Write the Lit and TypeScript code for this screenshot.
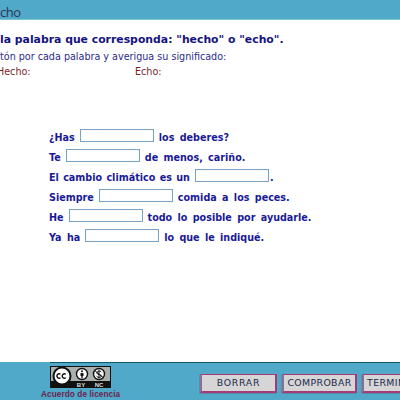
import { LitElement, html, css } from "lit";
import { customElement } from "lit/decorators.js";

const rows: [string, string, boolean][] = [
  ["¿Has", "los deberes?", false],
  ["Te", "de menos, cariño.", false],
  ["El cambio climático es un", ".", true],
  ["Siempre", "comida a los peces.", false],
  ["He", "todo lo posible por ayudarle.", false],
  ["Ya ha", "lo que le indiqué.", false],
];

@customElement("app-root")
export class AppRoot extends LitElement {
  static styles = css`
    :host { display: block; width: 400px; height: 400px; overflow: hidden; background: #fff; font-family: "DejaVu Sans", Verdana, sans-serif; }
    .page { display: flex; flex-direction: column; height: 400px; }
    .header { height: 20px; box-sizing: border-box; background: #50a9c8; border-bottom: 1px solid #7cc6d6; display: flex; align-items: flex-end; flex: none; }
    .logo { font: 400 13px/14px "Open Sans", sans-serif; color: #2b3558; letter-spacing: -0.5px; height: 14px; }
    .main { flex: 1; min-height: 0; display: flex; flex-direction: column; overflow: hidden; }
    .title { margin: 13px 0 0 0; font-size: 10.85px; line-height: 14px; font-weight: 700; color: #14147e; white-space: nowrap; }
    .sub { margin: 3px 0 0 0; font-size: 9.6px; line-height: 14px; color: #2b2b8c; white-space: nowrap; }
    .defs { margin: 1px 0 0 -3px; display: flex; font-size: 9.6px; line-height: 14px; color: #7a1f1f; }
    .defs span:first-child { width: 138px; }
    .rows { margin: 51px 0 0 49px; display: flex; flex-direction: column; gap: 6.1px; }
    .row { display: flex; align-items: center; height: 14px; font-size: 9.6px; font-weight: 700; color: #1a1a96; word-spacing: 2px; white-space: nowrap; gap: 5px; }
    .row .input { width: 72px; height: 11px; margin-top: -4px; border: 1px solid #7ba3c6; background: #fff; flex: none; box-shadow: inset 0 0 1px #c5d7e8; }
    .row .tight { margin-left: -4px; }
    .row .narrow { word-spacing: 1px; }
    .footer { height: 38px; flex: none; box-sizing: border-box; background: #50a9c8; position: relative; display: flex; }
    .rule { position: absolute; left: 50px; right: 0; top: 0; height: 1px; background: #0e5a62; }
    .lic { width: 200px; flex: none; display: flex; flex-direction: column; align-items: flex-start; padding: 4px 0 0 41px; box-sizing: border-box; }
    .lic svg { display: block; margin-left: 9px; margin-bottom: 1px; }
    .lic span { font: 700 8.2px/11px "Liberation Sans", Arial, sans-serif; letter-spacing: 0.1px; color: #6b1f4e; white-space: nowrap; }
    .buttons { display: flex; gap: 5px; padding-top: 12px; align-items: flex-start; }
    .btn { box-sizing: border-box; height: 19px; background: #d6d6d6; border-style: solid; border-width: 1px 2px 2px 2px; border-color: #a53a78 #a53a78 #a53a78 #8a6f98; font: 9.4px/16px "DejaVu Sans", sans-serif; color: #23294c; text-align: center; white-space: nowrap; overflow: hidden; flex: none; box-shadow: -1px 1px 0 #5b8aa5; }
    .b1 { width: 77px; letter-spacing: .7px; }
    .b2 { width: 75px; letter-spacing: .35px; }
    .b3 { width: 60px; text-align: left; padding-left: 3px; letter-spacing: .4px; }
  `;

  render() {
    return html`<div class="page">
      <div class="header"><div class="logo">cho</div></div>
      <div class="main">
        <div class="title">la palabra que corresponda: "hecho" o "echo".</div>
        <div class="sub">tón por cada palabra y averigua su significado:</div>
        <div class="defs"><span>Hecho:</span><span>Echo:</span></div>
        <div class="rows">
          ${rows.map(([a, b, tight]) => html`<div class="row">
            <span class=${tight ? "narrow" : ""}>${a}</span><span class="input"></span><span class=${tight ? "tight" : ""}>${b}</span>
          </div>`)}
        </div>
      </div>
      <div class="footer">
        <div class="rule"></div>
        <div class="lic">
          <svg width="61" height="22" viewBox="0 0 61 22">
            <rect width="61" height="22" fill="#111"/>
            <rect x="1" y="1" width="59" height="14" fill="#aab0ab"/>
            <circle cx="12" cy="10" r="8.5" fill="#fff" stroke="#111" stroke-width="2"/>
            <path d="M10.5 8.3a2.2 2.2 0 1 0 0 3.4M15.8 8.3a2.2 2.2 0 1 0 0 3.4" fill="none" stroke="#111" stroke-width="1.4"/>
            <circle cx="32" cy="8" r="5.5" fill="#fff" stroke="#111" stroke-width="1.4"/>
            <circle cx="32" cy="5.2" r="1" fill="#111"/>
            <path d="M30.5 7h3v3h-.8v2.2h-1.4V10h-.8z" fill="#111"/>
            <circle cx="49" cy="8" r="5.5" fill="#fff" stroke="#111" stroke-width="1.4"/>
            <path d="M51.5 6.2C50.5 4.6 47 4.6 46.8 7c0 2 4.6 1 4.6 3 0 1.8-3.4 2-4.8.3M49 3.6v8.8M44.6 4.4l8.8 7.4" fill="none" stroke="#111" stroke-width="1"/>
            <text x="31" y="20.5" font-family="Liberation Sans" font-size="6" font-weight="700" fill="#ddd" text-anchor="middle">BY</text>
            <text x="49" y="20.5" font-family="Liberation Sans" font-size="6" font-weight="700" fill="#ddd" text-anchor="middle">NC</text>
          </svg>
          <span>Acuerdo de licencia</span>
        </div>
        <div class="buttons">
          <div class="btn b1">BORRAR</div>
          <div class="btn b2">COMPROBAR</div>
          <div class="btn b3">TERMINAR</div>
        </div>
      </div>
    </div>`;
  }
}
